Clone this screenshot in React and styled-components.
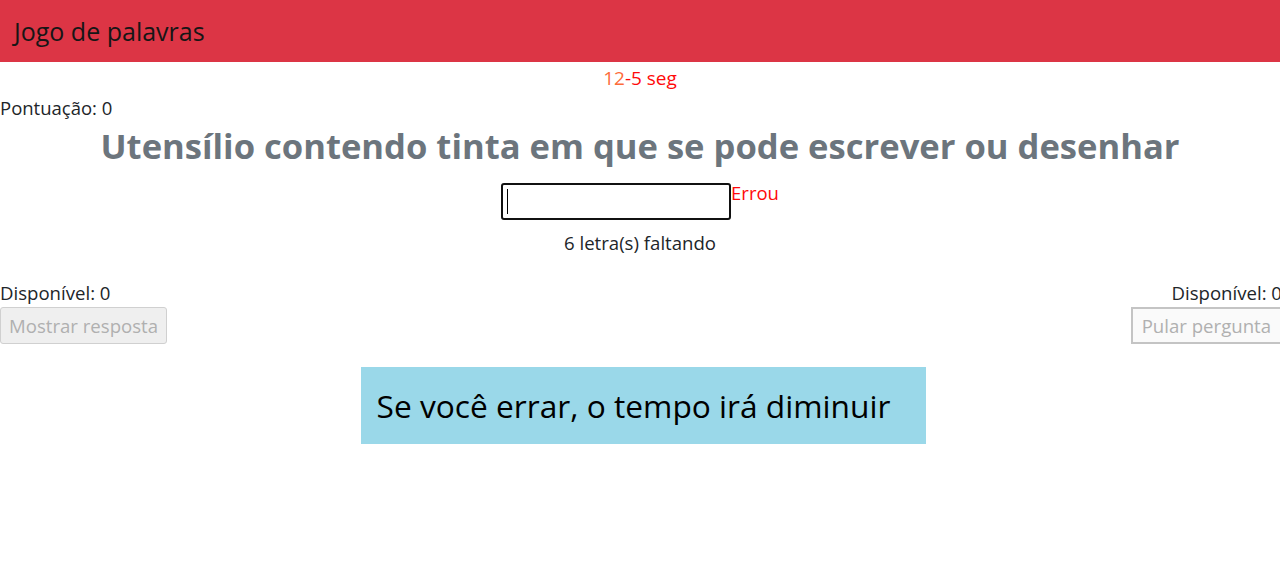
import styled, { createGlobalStyle } from "styled-components";

const Global = createGlobalStyle`
  body {
    margin: 0;
    font-family: "Open Sans", "Noto Sans", sans-serif;
    color: #212529;
    background: #fff;
    overflow: hidden;
  }
`;

export default function App() {
  return (
    <>
      <Global />
      <Navbar>
        <Brand>Jogo de palavras</Brand>
      </Navbar>
      <Main>
        <Timer>
          <Orange>12</Orange>
          <Red>-5 seg</Red>
        </Timer>
        <Score>Pontuação: 0</Score>
        <Question>Utensílio contendo tinta em que se pode escrever ou desenhar</Question>
        <AnswerRow>
          <InputWrap>
            <Answer type="text" />
            <Caret />
          </InputWrap>
          <Wrong>Errou</Wrong>
        </AnswerRow>
        <Missing>6 letra(s) faltando</Missing>
        <Helpers>
          <HelpCol>
            <Available>Disponível: 0</Available>
            <HelpButton disabled>Mostrar resposta</HelpButton>
          </HelpCol>
          <HelpCol right>
            <Available>Disponível: 0</Available>
            <HelpButton disabled outlined>
              Pular pergunta
            </HelpButton>
          </HelpCol>
        </Helpers>
        <Notice>Se você errar, o tempo irá diminuir</Notice>
      </Main>
    </>
  );
}

const Navbar = styled.nav`
  height: 62px;
  background: #dc3545;
  display: flex;
  align-items: center;
  padding: 0 14px;
`;

const Brand = styled.div`
  font-size: 25px;
  font-weight: 500;
  color: #161616;
`;

const Main = styled.div`
  display: flex;
  flex-direction: column;
  align-items: center;
`;

const Timer = styled.div`
  font-size: 19px;
  line-height: 32px;
`;

const Orange = styled.span`
  color: #fd6b3a;
`;

const Red = styled.span`
  color: #ff0a0a;
`;

const Score = styled.div`
  align-self: flex-start;
  font-size: 18.5px;
  line-height: 28px;
`;

const Question = styled.h1`
  margin: 0;
  font-size: 34.6px;
  line-height: 48px;
  font-weight: 700;
  color: #6c757d;
  text-align: center;
`;

const AnswerRow = styled.div`
  display: flex;
  align-items: flex-start;
  margin-top: 13px;
`;

const InputWrap = styled.div`
  position: relative;
`;

const Answer = styled.input`
  display: block;
  width: 230px;
  height: 37px;
  box-sizing: border-box;
  border: 2px solid #111;
  border-radius: 3px;
  outline: none;
  font-size: 16px;
`;

const Caret = styled.span`
  position: absolute;
  left: 6px;
  top: 6px;
  width: 1px;
  height: 25px;
  background: #000;
`;

const Wrong = styled.span`
  color: #ff0a0a;
  font-size: 18.5px;
  line-height: 20px;
`;

const Missing = styled.div`
  font-size: 18.6px;
  line-height: 24px;
  margin-top: 11px;
`;

const Helpers = styled.div`
  align-self: stretch;
  display: flex;
  justify-content: space-between;
  margin-top: 24px;
  margin-right: -2px;
`;

const HelpCol = styled.div`
  display: flex;
  flex-direction: column;
  align-items: ${(p) => (p.right ? "flex-end" : "flex-start")};
`;

const Available = styled.div`
  font-size: 18.6px;
  line-height: 28px;
`;

const HelpButton = styled.button`
  height: 37px;
  font-family: inherit;
  font-size: 18.6px;
  color: #b0b0b0;
  background: ${(p) => (p.outlined ? "#fafafa" : "#efefef")};
  border: ${(p) => (p.outlined ? "2px solid #c4c4c4" : "1px solid #d0d0d0")};
  border-radius: ${(p) => (p.outlined ? "0" : "3px")};
  padding: ${(p) => (p.outlined ? "0 9px" : "0 8px")};
`;

const Notice = styled.div`
  margin-top: 23px;
  margin-left: 6px;
  width: 565px;
  height: 77px;
  box-sizing: border-box;
  padding: 0 16px;
  background: #9ad8e9;
  color: #000;
  font-size: 31.7px;
  display: flex;
  align-items: center;
`;
